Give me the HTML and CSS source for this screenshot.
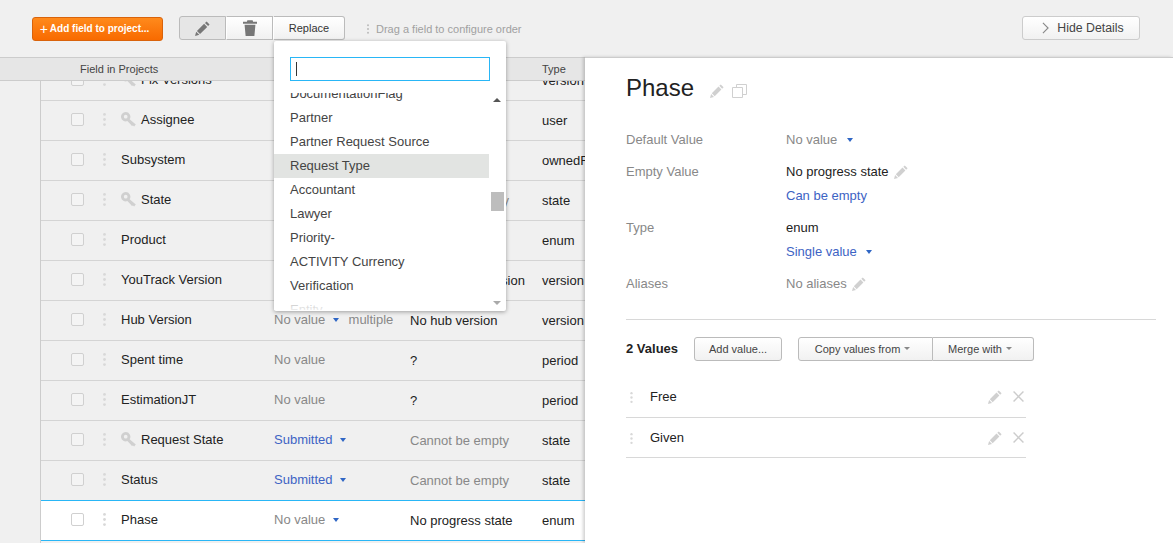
FILE: index.html
```html
<!DOCTYPE html>
<html lang="en">
<head>
<meta charset="utf-8">
<title>Fields</title>
<link rel="stylesheet" href="styles.css">
</head>
<body>
<svg class="defs" width="0" height="0" aria-hidden="true">
  <symbol id="pencil" viewBox="0 0 14 14"><path d="M10.8.4 13.600 3.200 12.200 4.700 9.300 1.800zM8.500 2.600 11.400 5.500 4.700 12.200 1.800 9.300zM1.100 10 4 12.900 0 14z"/></symbol>
  <symbol id="trash" viewBox="0 0 16 18"><path d="M5 0h6l.5 1.800H16v2.200H0V1.800h4.500zM1.800 5.200h12.400L13 18H3z"/></symbol>
  <symbol id="key" viewBox="0 0 16 16"><path fill-rule="evenodd" d="M5 0a5 5 0 0 1 4.200 7.700L15.800 13.300 14 15.500 12.800 14.300 11.600 15 10.600 13.700 6.700 9.700A5 5 0 1 1 5 0zM5 3a2 2 0 1 0 0 4 2 2 0 0 0 0-4z"/></symbol>
  <symbol id="copy" viewBox="0 0 15 14"><path fill="none" stroke="currentColor" d="M.5 3.500h10v10H.5zM4.500 3.500v-3h10v10h-4"/></symbol>
  <symbol id="dots" viewBox="0 0 3 14"><circle cx="1.500" cy="1.500" r="1.500"/><circle cx="1.500" cy="7" r="1.500"/><circle cx="1.500" cy="12.500" r="1.500"/></symbol>
</svg>

<header class="toolbar">
  <button class="btn btn-add" type="button"><span class="plus">+</span> Add field to project...</button>
  <div class="btn-group">
    <button class="btn seg seg-active" type="button"><svg class="ic-pencil-lg"><use href="#pencil"/></svg></button>
    <button class="btn seg" type="button"><svg class="ic-trash"><use href="#trash"/></svg></button>
    <button class="btn seg seg-text" type="button">Replace</button>
  </div>
  <div class="hint"><svg class="dots-sm"><use href="#dots"/></svg>Drag a field to configure order</div>
  <button class="btn btn-hide" type="button"><svg class="chev" viewBox="0 0 8 14"><path d="M1 1l6 6-6 6" fill="none" stroke="#888" stroke-width="1.300"/></svg>Hide Details</button>
</header>

<main class="main">
  <section class="fields">
    <div class="thead"><span class="th-name">Field in Projects</span><span class="th-type">Type</span></div>
    <div class="tbody">
      <div class="rows">
        <div class="row"><i class="cb"></i><svg class="dots"><use href="#dots"/></svg><span class="name"><svg class="key"><use href="#key"/></svg>Fix Versions</span><span class="muted">No value</span><span class="cell-low muted">?</span><span class="cell-low">version</span></div>
        <div class="row"><i class="cb"></i><svg class="dots"><use href="#dots"/></svg><span class="name"><svg class="key"><use href="#key"/></svg>Assignee</span><span class="muted">No value</span><span class="cell-low">Unassigned</span><span class="cell-low">user</span></div>
        <div class="row"><i class="cb"></i><svg class="dots"><use href="#dots"/></svg><span class="name">Subsystem</span><span class="muted">No value</span><span class="cell-low">No subsystem</span><span class="cell-low">ownedField</span></div>
        <div class="row"><i class="cb"></i><svg class="dots"><use href="#dots"/></svg><span class="name"><svg class="key"><use href="#key"/></svg>State</span><span class="link">Submitted</span><span class="cell-low muted">Cannot be empty</span><span class="cell-low">state</span></div>
        <div class="row"><i class="cb"></i><svg class="dots"><use href="#dots"/></svg><span class="name">Product</span><span class="muted">No value</span><span class="cell-low">No product</span><span class="cell-low">enum</span></div>
        <div class="row"><i class="cb"></i><svg class="dots"><use href="#dots"/></svg><span class="name">YouTrack Version</span><span class="muted">No value</span><span class="cell-low">No youtrack version</span><span class="cell-low">version</span></div>
        <div class="row"><i class="cb"></i><svg class="dots"><use href="#dots"/></svg><span class="name">Hub Version</span><span class="muted">No value <b class="caret"></b> <span class="multi">multiple</span></span><span class="cell-low">No hub version</span><span class="cell-low">version</span></div>
        <div class="row"><i class="cb"></i><svg class="dots"><use href="#dots"/></svg><span class="name">Spent time</span><span class="muted">No value</span><span class="cell-low">?</span><span class="cell-low">period</span></div>
        <div class="row"><i class="cb"></i><svg class="dots"><use href="#dots"/></svg><span class="name">EstimationJT</span><span class="muted">No value</span><span class="cell-low">?</span><span class="cell-low">period</span></div>
        <div class="row"><i class="cb"></i><svg class="dots"><use href="#dots"/></svg><span class="name"><svg class="key"><use href="#key"/></svg>Request State</span><span class="link">Submitted <b class="caret"></b></span><span class="cell-low muted">Cannot be empty</span><span class="cell-low">state</span></div>
        <div class="row"><i class="cb"></i><svg class="dots"><use href="#dots"/></svg><span class="name">Status</span><span class="link">Submitted <b class="caret"></b></span><span class="cell-low muted">Cannot be empty</span><span class="cell-low">state</span></div>
        <div class="row row-selected"><i class="cb"></i><svg class="dots"><use href="#dots"/></svg><span class="name">Phase</span><span class="muted">No value <b class="caret"></b></span><span class="cell-low">No progress state</span><span class="cell-low">enum</span></div>
      </div>
    </div>
  </section>

  <aside class="panel">
    <div class="title-line">
      <h1 class="title">Phase</h1>
      <svg class="ic-grey ic-title"><use href="#pencil"/></svg>
      <svg class="ic-copy"><use href="#copy"/></svg>
    </div>
    <dl class="props">
      <dt>Default Value</dt><dd class="muted">No value <b class="caret caret-wide"></b></dd>
      <dt>Empty Value</dt><dd>No progress state <svg class="ic-grey ic-after"><use href="#pencil"/></svg><br><span class="link">Can be empty</span></dd>
      <dt>Type</dt><dd>enum<br><span class="link">Single value <b class="caret caret-wide"></b></span></dd>
      <dt>Aliases</dt><dd class="muted">No aliases <svg class="ic-grey ic-after"><use href="#pencil"/></svg></dd>
    </dl>
    <div class="values-head">
      <strong class="count">2 Values</strong>
      <button class="btn small add-value" type="button">Add value...</button>
      <div class="small-group">
        <button class="btn small copy-from" type="button">Copy values from <b class="caret grey"></b></button>
        <button class="btn small merge" type="button">Merge with <b class="caret grey"></b></button>
      </div>
    </div>
    <ul class="values">
      <li class="value"><svg class="dots-v"><use href="#dots"/></svg><span class="value-name">Free</span><svg class="ic-grey"><use href="#pencil"/></svg><svg class="x" viewBox="0 0 10 10"><path d="M.5.500l9 9M9.500.500l-9 9"/></svg></li>
      <li class="value"><svg class="dots-v"><use href="#dots"/></svg><span class="value-name">Given</span><svg class="ic-grey"><use href="#pencil"/></svg><svg class="x" viewBox="0 0 10 10"><path d="M.5.500l9 9M9.500.500l-9 9"/></svg></li>
    </ul>
  </aside>
</main>

<div class="dropdown">
  <div class="search"><span class="cursor"></span></div>
  <div class="list-wrap">
    <ul class="list">
      <li>DocumentationFlag</li>
      <li>Partner</li>
      <li>Partner Request Source</li>
      <li class="hl">Request Type</li>
      <li>Accountant</li>
      <li>Lawyer</li>
      <li>Priority-</li>
      <li>ACTIVITY Currency</li>
      <li>Verification</li>
      <li>Entity</li>
    </ul>
    <div class="fade"></div>
    <div class="scrollbar"><b class="up"></b><b class="thumb"></b><b class="down"></b></div>
  </div>
</div>
</body>
</html>
```

FILE: styles.css
```css
* { box-sizing: border-box; }
html, body { margin: 0; height: 543px; overflow: hidden; }
body { position: relative; background: #f0f0f0; color: #222; font: 13px/16px "Liberation Sans", Arial, sans-serif; }
.defs { position: absolute; }
svg { fill: currentColor; }

.btn { display: inline-flex; align-items: center; justify-content: center; height: 24px; padding: 0; border: 1px solid #bbb; border-radius: 3px; background: linear-gradient(#fff, #f1f1f1); color: #444; font: 11px/16px "Liberation Sans", Arial, sans-serif; }

.toolbar { display: flex; align-items: flex-start; height: 57px; padding: 16px 33px 0 32px; }
.btn-add { width: 131px; margin-top: 1px; padding-right: 6px; border-color: #d9630b; background: linear-gradient(#ff8a1c, #f86a00); color: #fff; font-size: 10px; font-weight: bold; white-space: nowrap; }
.plus { margin-right: 2px; font-size: 14px; font-weight: normal; }
.btn-group { display: flex; width: 166px; margin-left: 16px; }
.seg { width: 47px; border-radius: 0; border-left: 1px solid #fff; color: #777; }
.seg:first-child { border-left-color: #bbb; border-radius: 3px 0 0 3px; }
.seg:last-child { border-radius: 0 3px 3px 0; }
.seg-active { background: #e6e6e6; }
.seg-text { width: 72px; color: #333; }
.ic-pencil-lg { width: 15px; height: 15px; }
.ic-trash { width: 14px; height: 16px; }
.hint { display: flex; align-items: center; margin: 5px 0 0 22px; color: #a0a0a0; font-size: 11px; }
.dots-sm { width: 2px; height: 10px; margin-right: 7px; color: #bbb; }
.btn-hide { width: 118px; margin-left: auto; padding-left: 4px; border-color: #ccc; color: #444; font-size: 12.300px; }
.chev { width: 7px; height: 12px; margin-right: 8px; }

.main { display: flex; height: 486px; }
.fields { display: flex; flex-direction: column; width: 585px; flex: none; }
.thead { flex: none; display: flex; height: 24px; padding: 3px 0 0 80px; border-top: 1px solid #ccc; border-bottom: 1px solid #ccc; background: #e6e6e6; color: #444; font-size: 11px; line-height: 17px; }
.th-name { width: 462px; }
.tbody { flex: 1; overflow: hidden; margin-left: 40px; border-left: 1px solid #ccc; }
.rows { margin-top: -20px; }
.row { display: grid; grid-template-columns: 63px 17px 153px 136px 132px 60px; align-items: center; height: 40px; padding-bottom: 2px; border-bottom: 1px solid #d4d4d4; white-space: nowrap; overflow: hidden; color: #222; }
.cb { width: 13px; height: 13px; margin-left: 30px; border: 1px solid #d0d0d0; border-radius: 2px; background: #f4f4f4; }
.row-selected { height: 41px; margin-top: -1px; border: 0; box-shadow: inset 0 1px 0 #29b6f6, inset 0 -1px 0 #29b6f6; background: #fff; }
.row-selected .cb { background: #fff; }
.dots { width: 3px; height: 13px; margin-left: -1px; color: #d8d8d8; }
.name { display: flex; align-items: center; }
.cell-low { margin-top: 2px; }
.key { width: 15px; height: 15px; margin-right: 5px; color: #d0d0d0; }
.muted { color: #888; }
.link { color: #3d63c4; }
.multi { margin-left: 6px; }
.caret { display: inline-block; width: 0; height: 0; margin: 0 0 2px 4px; border: 3.500px solid transparent; border-top: 4px solid #2f66c5; border-bottom: 0; }
.caret-wide { margin-left: 6px; }
.caret.grey { margin-left: 4px; border-width: 3px 3px 0; border-top-color: #888; }

.panel { position: relative; flex: 1; min-width: 0; padding: 16px 17px 0 41px; background: #fff; border-top: 1px solid #ccc; box-shadow: -2px 0 3px rgba(0, 0, 0, .18); }
.title-line { display: flex; align-items: center; height: 30px; margin-top: -1px; }
.title { margin: 0 16px 0 0; font-size: 24px; line-height: 30px; font-weight: normal; color: #222; }
.ic-grey { width: 14px; height: 14px; color: #d0d0d0; vertical-align: -3px; }
.ic-after { margin-left: 2px; }
.ic-title { margin-top: 6px; margin-right: 8px; }
.ic-copy { width: 15px; height: 14px; margin-top: 6px; color: #d0d0d0; }
.props { display: grid; grid-template-columns: 160px 1fr; row-gap: 8px; margin: 25px 0 0; padding-bottom: 23px; border-bottom: 1px solid #d8d8d8; line-height: 24px; }
.props dt { color: #888; }
.props dd { margin: 0; color: #222; }
.props dd.muted { color: #888; }
.values-head { display: flex; align-items: center; height: 24px; margin-top: 17px; }
.count { width: 68px; color: #222; }
.add-value { width: 88px; }
.small { height: 24px; border-color: #bbb; color: #444; }
.small-group { display: flex; margin-left: 16px; }
.copy-from { width: 135px; padding-right: 6px; border-radius: 3px 0 0 3px; }
.merge { width: 101px; padding-right: 6px; border-left: 0; border-radius: 0 3px 3px 0; }
.values { width: 400px; margin: 17px 0 0; padding: 0; list-style: none; }
.value { display: flex; align-items: center; height: 40px; padding: 0 2px 2px 4px; border-bottom: 1px solid #d8d8d8; color: #222; }
.value:last-child { padding-bottom: 0; }
.dots-v { flex: none; width: 3px; height: 11px; margin: 2px 17px 0 0; color: #d8d8d8; }
.value-name { flex: 1; }
.x { width: 11px; height: 11px; margin-left: 11px; fill: none; stroke: #ccc; stroke-width: 1.300; }

.dropdown { position: absolute; left: 274px; top: 41px; width: 232px; height: 270px; padding: 16px 0 0; background: #fff; border-radius: 2px; box-shadow: 0 1px 4px rgba(0, 0, 0, .35); color: #444; }
.search { display: flex; align-items: center; width: 200px; height: 24px; margin-left: 16px; padding-left: 5px; border: 1px solid #29b6f6; }
.cursor { width: 1px; height: 14px; background: #333; }
.list-wrap { position: relative; height: 217px; margin-top: 12px; overflow: hidden; }
.list { margin: -11px 0 0; padding: 0; list-style: none; }
.list li { width: 215px; height: 24px; padding-left: 16px; line-height: 24px; }
.list .hl { background: #e2e4e2; }
.fade { position: absolute; left: 0; right: 17px; bottom: 0; height: 14px; background: linear-gradient(rgba(255, 255, 255, .5), rgba(255, 255, 255, .9)); }
.scrollbar { position: absolute; top: 0; right: 1px; bottom: 0; width: 16px; }
.up, .down, .thumb { position: absolute; display: block; }
.up { top: 5px; left: 4px; border: 4px solid transparent; border-top: 0; border-bottom: 4px solid #555; }
.down { bottom: 5px; left: 4px; border: 4px solid transparent; border-bottom: 0; border-top: 4px solid #aaa; }
.thumb { top: 99px; left: 2px; width: 13px; height: 19px; background: #bdbdbd; }
```
